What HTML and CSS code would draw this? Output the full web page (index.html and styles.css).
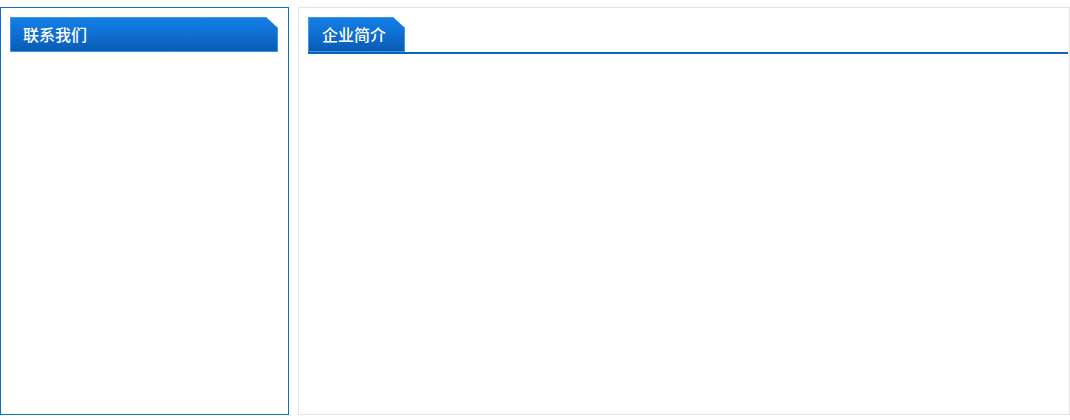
FILE: index.html
```html
<!DOCTYPE html>
<html>

<head>
    <title>企业简介</title>
    <link rel="stylesheet" href="styles.css">
</head>

<body>
    <div class="wrap">
        <div class="side-box">
            <div class="tab tab-wide">联系我们</div>
        </div>
        <div class="main-box">
            <div class="main-head">
                <div class="tab">企业简介</div>
            </div>
        </div>
    </div>
</body>

</html>
```

FILE: styles.css
```css
* {
    box-sizing: border-box;
}

body {
    margin: 0;
    background: #fff;
    font-family: "Noto Sans CJK SC", "Microsoft YaHei", sans-serif;
}

.wrap {
    display: flex;
    flex-direction: row;
    gap: 9px;
    padding-top: 7px;
    width: 1070px;
}

.side-box {
    width: 289px;
    height: 408px;
    border: 1px solid #0b6fd1;
    padding: 9px 9px 0 9px;
}

.main-box {
    width: 772px;
    height: 408px;
    border: 1px solid #e4e4e4;
    padding: 9px 1px 0 9px;
}

.main-head {
    display: flex;
    border-bottom: 2px solid #0a63b8;
}

.tab {
    height: 35px;
    line-height: 34px;
    width: 97px;
    padding-left: 14px;
    color: #fff;
    font-size: 16px;
    font-weight: 500;
    clip-path: polygon(0 0, calc(100% - 12px) 0, 100% 11px, 100% 100%, 0 100%);
    background:
        repeating-linear-gradient(135deg, rgba(255, 255, 255, 0.04) 0 1.4px, rgba(0, 0, 0, 0) 1.4px 2.8px),
        linear-gradient(180deg, #0f7ee6 0%, #0a6bd0 50%, #0556b0 100%);
    box-shadow: inset 0 0 0 1px #4196e4;
}

.tab-wide {
    width: 268px;
    padding-left: 13px;
}
```
